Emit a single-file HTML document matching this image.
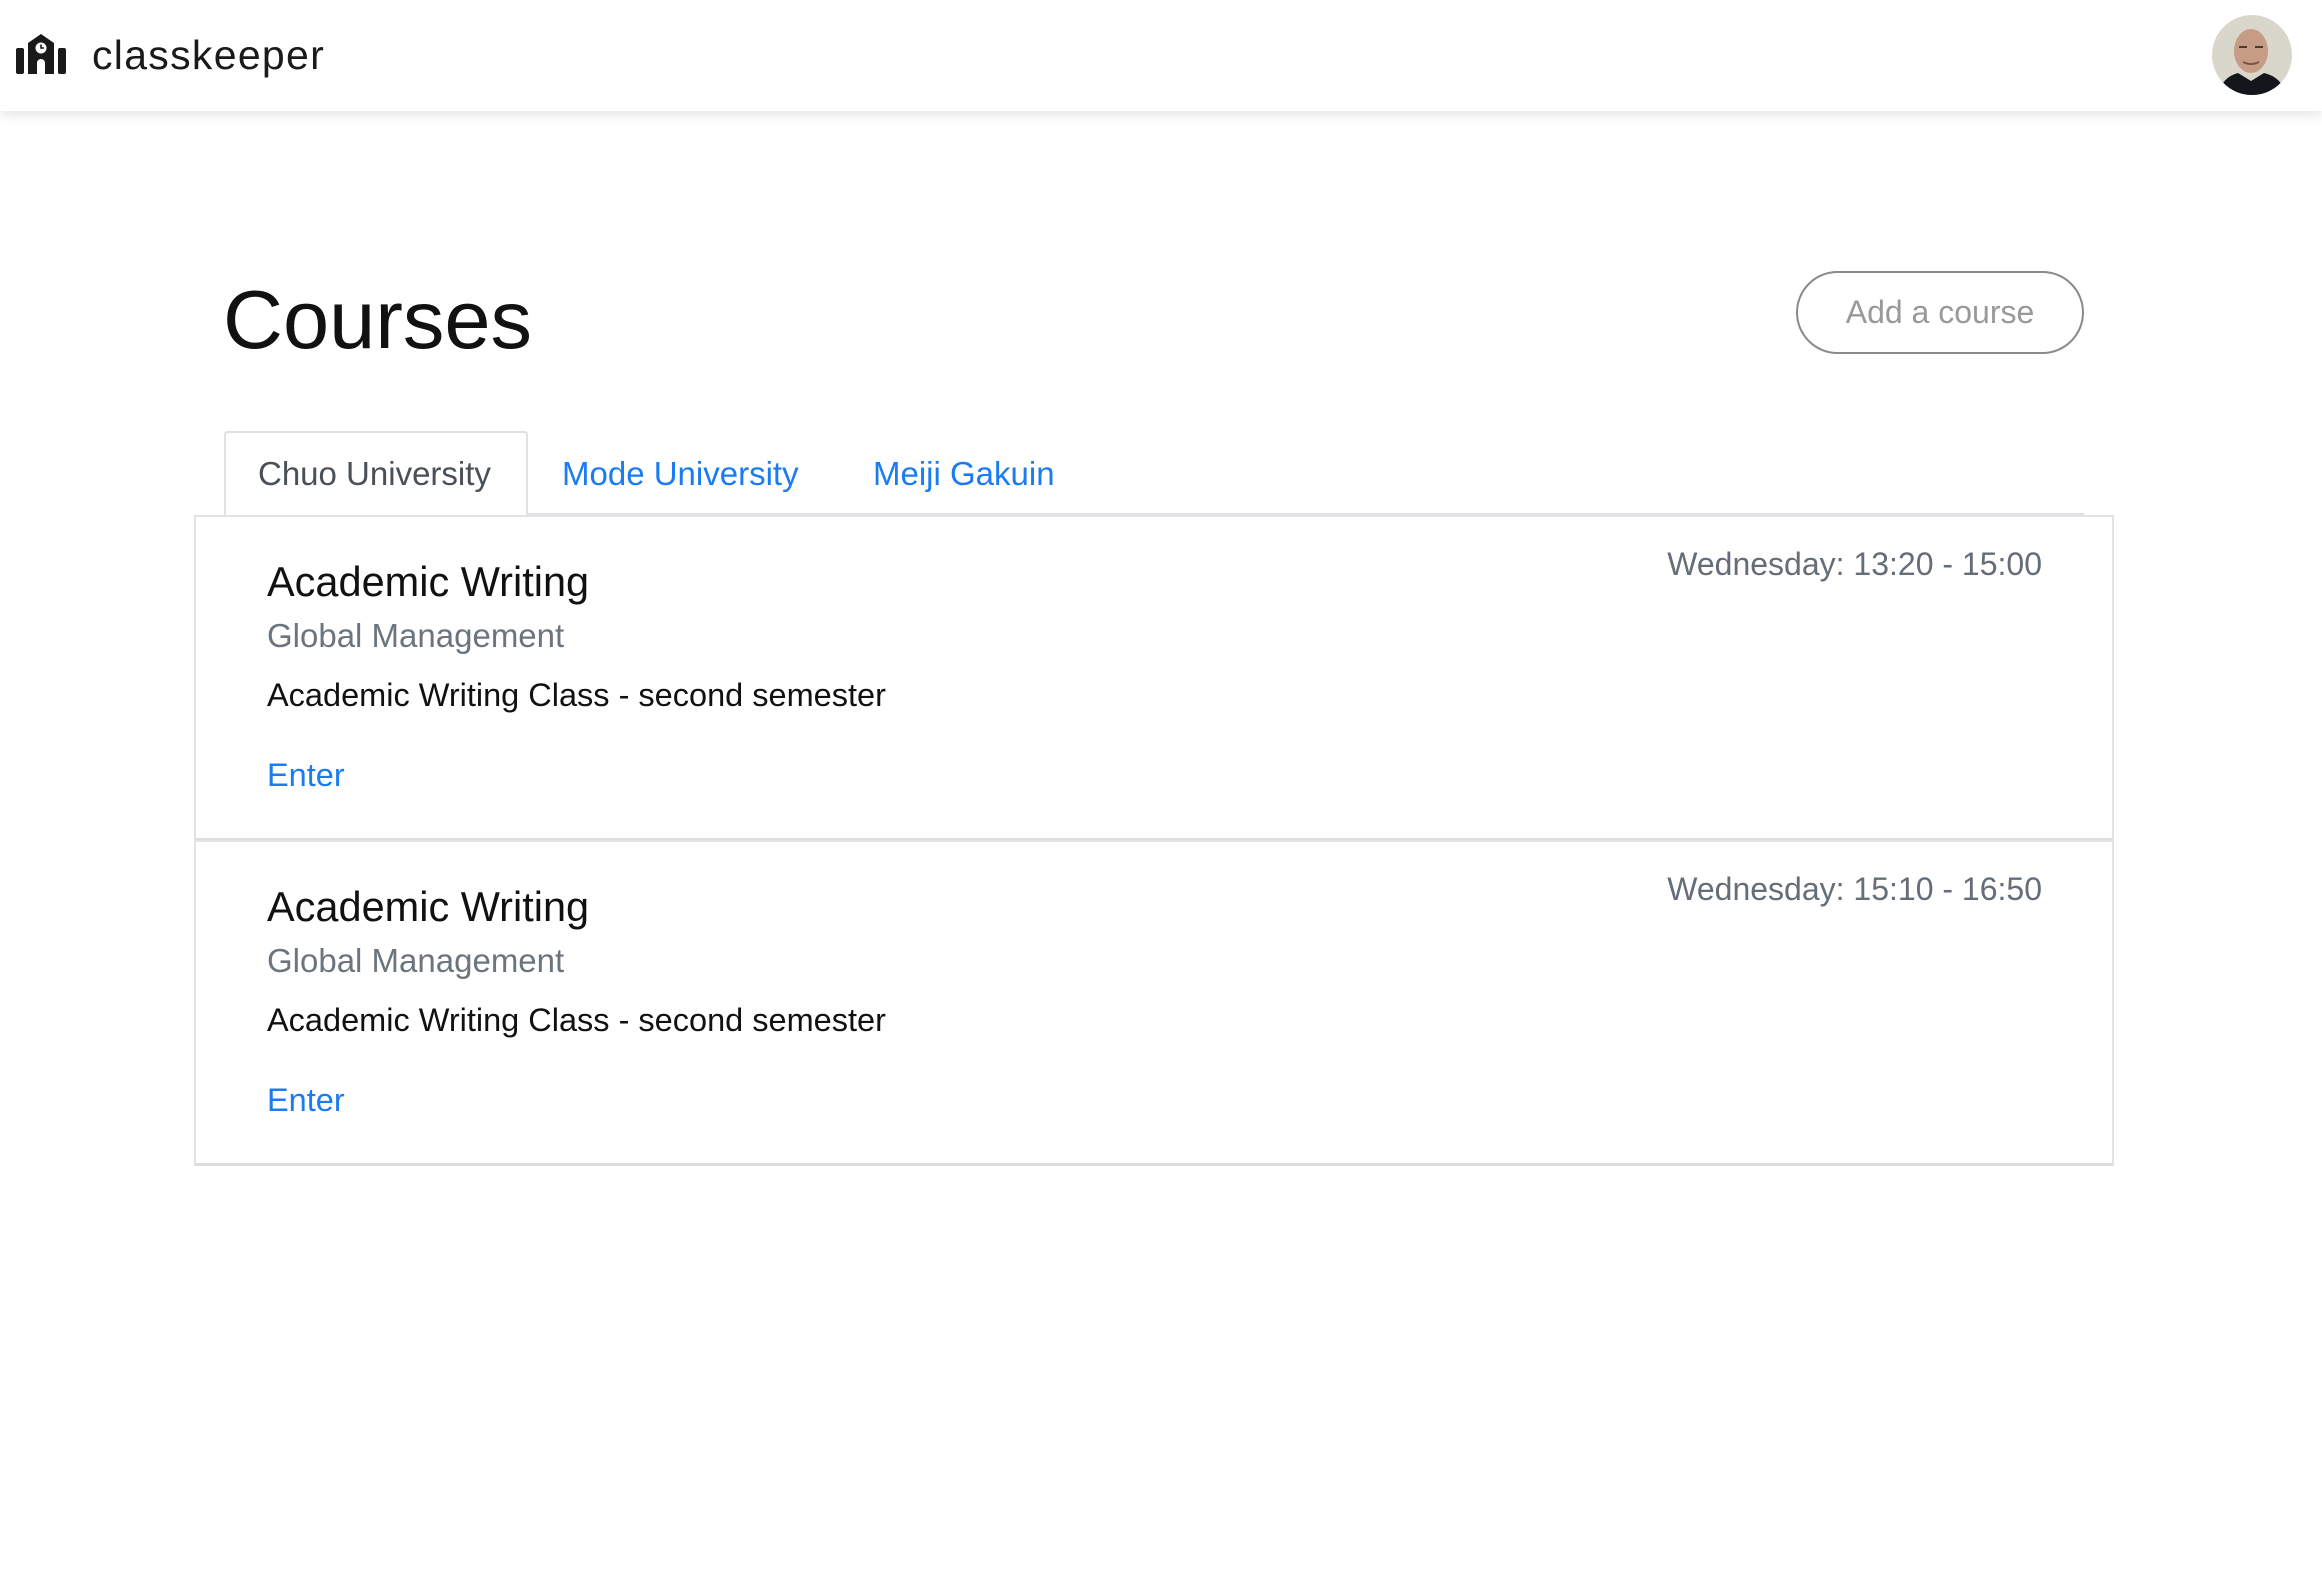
<!DOCTYPE html>
<html><head><meta charset="utf-8"><style>
*{margin:0;padding:0;box-sizing:border-box}
body{width:2322px;height:1594px;background:#fff;font-family:"Liberation Sans",sans-serif;position:relative;overflow:hidden}
.hdr{position:absolute;left:0;top:0;width:2322px;height:111px;background:#fff;box-shadow:0 3px 12px rgba(0,0,0,.12)}
.abs{position:absolute;white-space:nowrap}
.card{position:absolute;left:194px;width:1920px;height:326px;border:2px solid #e3e3e3;border-bottom:3px solid #ddd;background:#fff}
.t{font-size:41.5px;color:#111}
.g{font-size:33px;color:#6c757d}
.d{font-size:32.5px;color:#111}
.e{font-size:32.5px;color:#1a7cf0}
.w{font-size:32px;color:#646d78}
</style></head><body>
<div class="hdr">
<svg class="abs" style="left:16px;top:33px" width="50" height="41" viewBox="0 0 50 41">
<path d="M25 1 L38 10 V41 H29 V30 A4 4 0 0 0 21 30 V41 H12 V10 Z" fill="#1a1a1a"/>
<circle cx="25" cy="15" r="5.5" fill="#fff"/>
<path d="M25 11.5 V15 H28" stroke="#1a1a1a" stroke-width="1.6" fill="none"/>
<rect x="0" y="15" width="8" height="26" rx="2" fill="#1a1a1a"/>
<rect x="42" y="15" width="8" height="26" rx="2" fill="#1a1a1a"/>
</svg>
<div class="abs" style="left:92px;top:32px;font-size:41px;color:#1a1a1a;letter-spacing:1.3px">classkeeper</div>
<svg class="abs" style="left:2212px;top:15px" width="80" height="80" viewBox="0 0 80 80">
<defs><clipPath id="c"><circle cx="40" cy="40" r="40"/></clipPath></defs>
<g clip-path="url(#c)">
<rect width="80" height="80" fill="#d9d6cc"/>
<ellipse cx="39" cy="36" rx="17" ry="22" fill="#c79c86"/>
<path d="M6 80 Q10 62 26 58 L39 66 L52 58 Q70 62 74 80Z" fill="#15161b"/>
<rect x="27" y="31" width="8" height="2" fill="#4a3a33"/><rect x="43" y="31" width="8" height="2" fill="#4a3a33"/>
<path d="M31 47 Q39 51 47 47" stroke="#7a5548" stroke-width="2" fill="none"/>
</g></svg>
</div>
<div class="abs" style="left:223px;top:272px;font-size:83px;color:#111">Courses</div>
<div class="abs" style="left:1796px;top:271px;width:288px;height:83px;border:2px solid #8a8a8a;border-radius:42px;text-align:center;line-height:79px;font-size:32px;color:#999">Add a course</div>
<div class="abs" style="left:224px;top:513px;width:1860px;height:3px;background:#dee2e6"></div>
<div class="abs" style="left:224px;top:431px;width:304px;height:86px;border:2px solid #dee2e6;border-bottom:none;background:#fff;border-radius:4px 4px 0 0"></div>
<div class="abs" style="left:258px;top:455px;font-size:33px;color:#495057">Chuo University</div>
<div class="abs" style="left:562px;top:455px;font-size:33px;color:#1a7cf0">Mode University</div>
<div class="abs" style="left:873px;top:455px;font-size:33px;color:#1a7cf0">Meiji Gakuin</div>
<div class="card" style="top:515px">
<div class="abs t" style="left:71px;top:41px">Academic Writing</div>
<div class="abs g" style="left:71px;top:100px">Global Management</div>
<div class="abs d" style="left:71px;top:160px">Academic Writing Class - second semester</div>
<div class="abs e" style="left:71px;top:240px">Enter</div>
<div class="abs w" style="right:70px;top:29px">Wednesday: 13:20 - 15:00</div>
</div>
<div class="card" style="top:840px">
<div class="abs t" style="left:71px;top:41px">Academic Writing</div>
<div class="abs g" style="left:71px;top:100px">Global Management</div>
<div class="abs d" style="left:71px;top:160px">Academic Writing Class - second semester</div>
<div class="abs e" style="left:71px;top:240px">Enter</div>
<div class="abs w" style="right:70px;top:29px">Wednesday: 15:10 - 16:50</div>
</div>
</body></html>
